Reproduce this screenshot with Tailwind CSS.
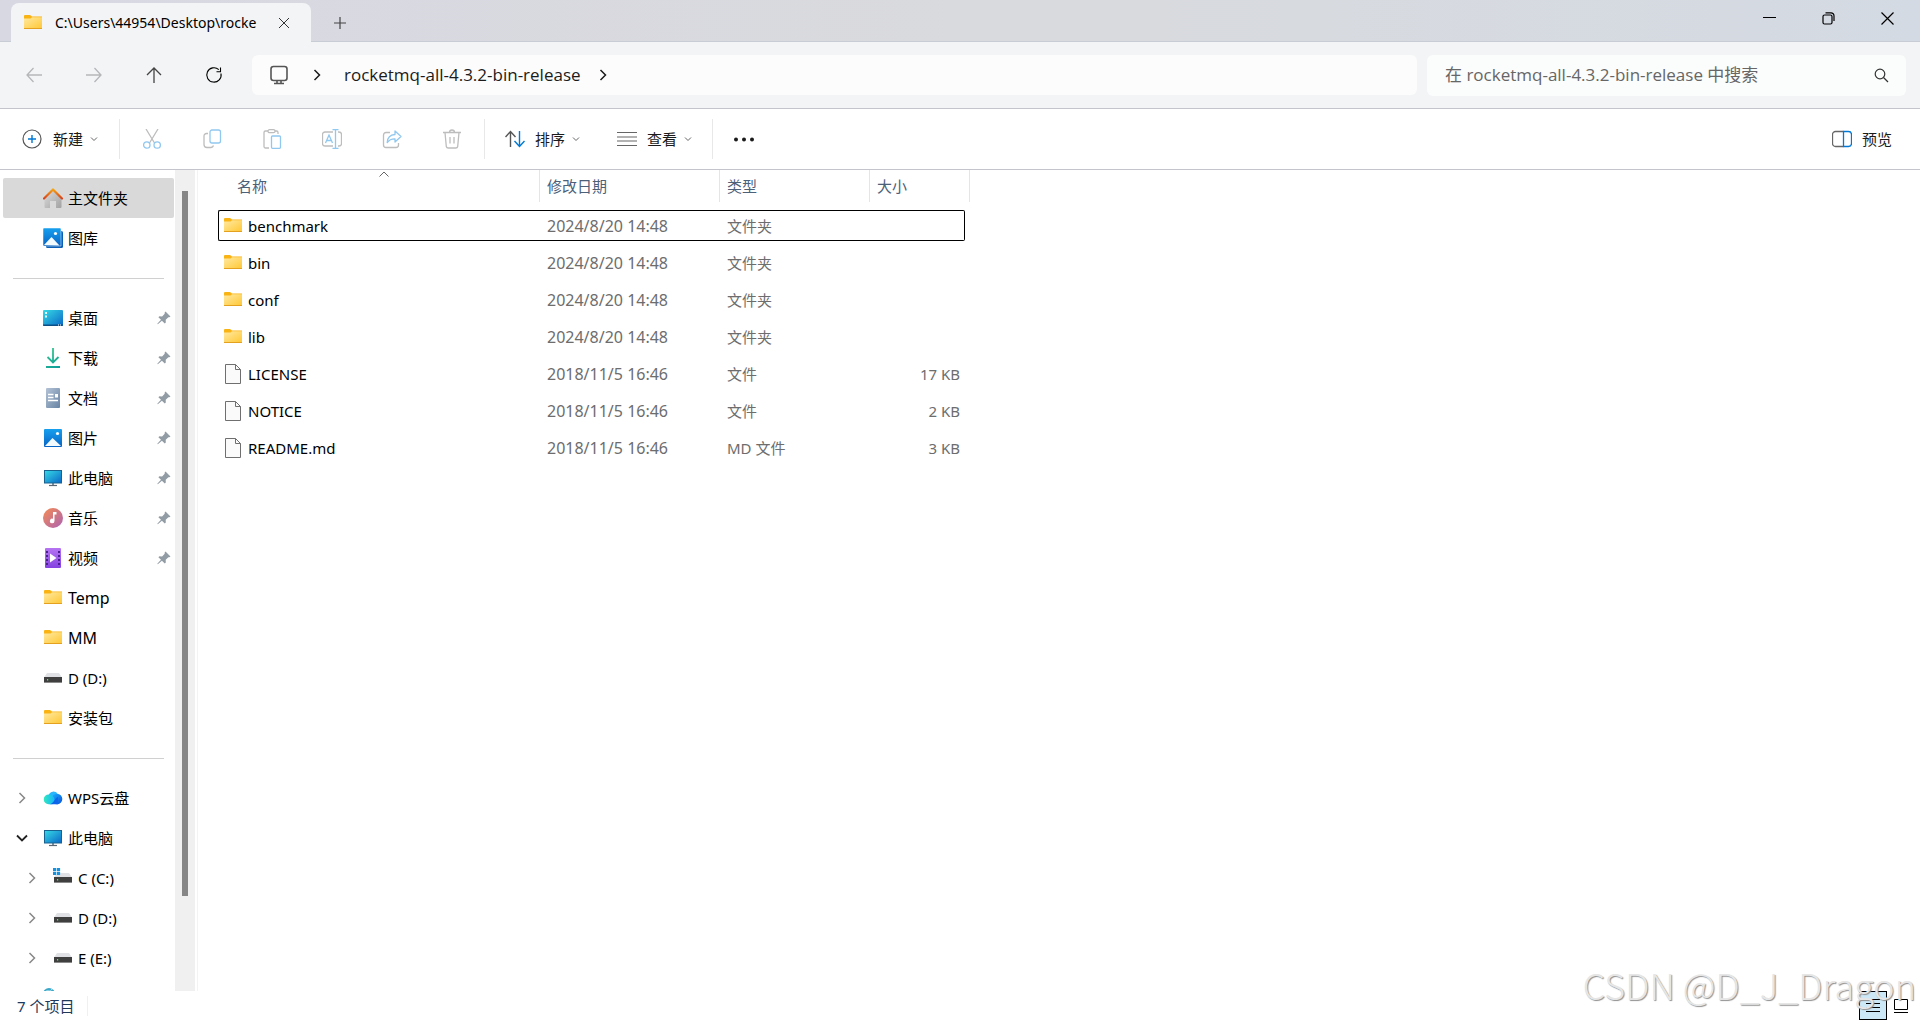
<!DOCTYPE html>
<html lang="zh-CN">
<head>
<meta charset="utf-8">
<meta name="viewport" content="width=device-width, initial-scale=1">
<title>rocketmq-all-4.3.2-bin-release</title>
<script src="https://cdn.jsdelivr.net/npm/@tailwindcss/browser@4"></script>
</head>
<body class="flex h-screen flex-col overflow-hidden bg-white font-['Noto_Sans','Noto_Sans_CJK_SC',sans-serif] text-[15px] leading-5 text-black">

<!-- Shared icon symbols -->
<svg class="absolute size-0" aria-hidden="true">
  <defs>
    <linearGradient id="gFolder" x1="0" y1="0" x2="1" y2="1"><stop offset="0" stop-color="#ffe9a2"/><stop offset="1" stop-color="#ffc937"/></linearGradient>
    <linearGradient id="gBlue" x1="0" y1="0" x2="0" y2="1"><stop offset="0" stop-color="#17a0ee"/><stop offset="1" stop-color="#0863c4"/></linearGradient>
    <linearGradient id="gScreen" x1="0" y1="0" x2="1" y2="1"><stop offset="0" stop-color="#36dbe6"/><stop offset="1" stop-color="#0a67c6"/></linearGradient>
    <linearGradient id="gHome" x1="0" y1="0" x2="1" y2="1"><stop offset="0" stop-color="#dcdcdc"/><stop offset="1" stop-color="#a2a2a2"/></linearGradient>
    <linearGradient id="gRoof" x1="0" y1="0" x2="0" y2="1"><stop offset="0" stop-color="#f6a10f"/><stop offset="1" stop-color="#d6431c"/></linearGradient>
    <linearGradient id="gDown" gradientUnits="userSpaceOnUse" x1="3" y1="0" x2="17" y2="20"><stop offset="0" stop-color="#3ccb8c"/><stop offset="1" stop-color="#0c9c9c"/></linearGradient>
    <linearGradient id="gDoc" x1="0" y1="0" x2="1" y2="1"><stop offset="0" stop-color="#b3c3d6"/><stop offset="1" stop-color="#6783a3"/></linearGradient>
    <linearGradient id="gMusic" x1="0" y1="0" x2="1" y2="1"><stop offset="0" stop-color="#f58b52"/><stop offset="1" stop-color="#ac63b4"/></linearGradient>
    <linearGradient id="gVideo" x1="0" y1="0" x2="0" y2="1"><stop offset="0" stop-color="#b674f2"/><stop offset="1" stop-color="#8443e0"/></linearGradient>
    <linearGradient id="gCloud" x1="0" y1="0" x2="1" y2="0"><stop offset="0" stop-color="#30e8c0"/><stop offset="1" stop-color="#16b4fa"/></linearGradient>
    <linearGradient id="gCloud2" x1="0" y1="0" x2="1" y2="1"><stop offset="0" stop-color="#1aaefc"/><stop offset="1" stop-color="#0b4fdc"/></linearGradient>
  </defs>
  <symbol id="folder" viewBox="0 0 20 20">
    <path d="M1 3a1 1 0 0 1 1-1h5l2 1.600h10V7H1z" fill="#f9b313"/>
    <path d="M1 5.500h6.500L9 4.200h10V15H1z" fill="url(#gFolder)"/>
    <path d="M1 15h18v1H1z" fill="#e3a11f"/>
  </symbol>
  <symbol id="file" viewBox="0 0 20 20">
    <path d="M2.500.5h10l5 5v14h-15z" fill="#fafafa" stroke="#6f6f6f"/>
    <path d="M12.500.5v5h5" fill="none" stroke="#6f6f6f"/>
  </symbol>
  <symbol id="home" viewBox="0 0 20 20">
    <path d="M1.500 9.500 10 2l8.500 7.500V19a1 1 0 0 1-1 1H13v-7H7v7H2.500a1 1 0 0 1-1-1z" fill="url(#gHome)"/>
    <path d="M1 10.500 10 1.500l9 9" fill="none" stroke="url(#gRoof)" stroke-width="2.200" stroke-linecap="round" stroke-linejoin="round"/>
  </symbol>
  <symbol id="gallery" viewBox="0 0 20 20">
    <path d="M5 3h13.500A1.500 1.500 0 0 1 20 4.500v14a1.500 1.500 0 0 1-1.500 1.500h-14A1.500 1.500 0 0 1 3 18.500z" fill="#0a5eb5"/>
    <path d="M1 0h16a1 1 0 0 1 1 1v17H1a1 1 0 0 1-1-1V1a1 1 0 0 1 1-1z" fill="url(#gBlue)" stroke="#fff" stroke-width=".5"/>
    <path d="m1 17 7.500-8 8 8.500z" fill="#f4fbff"/><circle cx="12.500" cy="5.500" r="1.600" fill="#fff"/>
  </symbol>
  <symbol id="desktop" viewBox="0 0 20 20">
    <rect y="2" width="20" height="16" rx="1" fill="url(#gScreen)"/>
    <path d="M0 16.500h20V17a1 1 0 0 1-1 1H1a1 1 0 0 1-1-1z" fill="#0b4f86"/>
    <path d="M2 4h2v2H2zm0 3.500h2v2H2z" fill="#e6ffff"/><path d="M15 17h1m1 0h1" stroke="#fff"/>
  </symbol>
  <symbol id="download" viewBox="0 0 20 20">
    <path d="M10 0v14M4.500 9l5.500 5.500L15.500 9M3 19h14" fill="none" stroke="url(#gDown)" stroke-width="1.800"/>
  </symbol>
  <symbol id="doc" viewBox="0 0 20 20">
    <rect x="3" width="14" height="20" rx="1" fill="url(#gDoc)"/>
    <path d="M5 6.500h5.500M5 9.500h5.500M5 12.500h10" stroke="#fff" stroke-width="1.300"/><path d="M12 6h3v3.500h-3z" fill="#fff"/>
  </symbol>
  <symbol id="picture" viewBox="0 0 20 20">
    <rect x="1" y="1" width="18" height="18" rx="1" fill="url(#gBlue)"/>
    <path d="m2 18 7.500-8 8.500 8z" fill="#f4fbff"/><circle cx="14.500" cy="5.500" r="1.600" fill="#fff"/>
  </symbol>
  <symbol id="pc" viewBox="0 0 20 20">
    <path d="M9 15h2v3H9z" fill="#8396a5"/><path d="M6 17.500h8" stroke="#5b6873" stroke-width="1.200"/>
    <rect x="1.500" y="2.500" width="17" height="12.500" fill="url(#gScreen)" stroke="#18628f"/>
  </symbol>
  <symbol id="music" viewBox="0 0 20 20">
    <circle cx="10" cy="10" r="10" fill="url(#gMusic)"/>
    <path d="M10 4h3.500v2.500H11.500V13a2.300 2.300 0 1 1-1.500-2.200z" fill="#fff"/>
  </symbol>
  <symbol id="video" viewBox="0 0 20 20">
    <rect x="2" width="16" height="20" rx="1" fill="url(#gVideo)"/>
    <path d="M4 3v15M16 3v15" stroke="#4b1f8f" stroke-width="2" stroke-dasharray="2 2"/>
    <path d="m7 5.500 6.500 4.500L7 14.500z" fill="#fff"/>
  </symbol>
  <symbol id="drive" viewBox="0 0 20 20">
    <path d="M4 5h12l3 4.500H1z" fill="#dfe1e4"/>
    <rect x="1" y="9" width="18" height="5.500" fill="#3f3f3f"/><path d="M1 14h18v1H1z" fill="#8a8a8a"/>
    <path d="M4 11h1.200v1.500H4z" fill="#4bea5c"/>
  </symbol>
  <symbol id="cdrive" viewBox="0 0 20 20">
    <use href="#drive"/><path d="M0 0h7v7H0z" fill="#fff"/>
    <path d="M0 0h3.200v3.200H0zM3.900 0h3.200v3.200H3.900zM0 3.900h3.200v3.200H0zM3.900 3.900h3.200v3.200H3.900z" fill="#1593e0"/>
  </symbol>
  <symbol id="cloud" viewBox="0 0 20 20">
    <path d="M5.500 8a5 5 0 0 1 9.500-1.500L17 12H5z" fill="#27b5fb"/>
    <circle cx="14" cy="11" r="5.300" fill="url(#gCloud2)"/>
    <path d="M5.800 6.500c3 0 5.200 2.300 5.700 4.500.4 2.500-1 5.300-3 5.300H5.500a4.900 4.900 0 0 1 .3-9.800z" fill="url(#gCloud)"/>
    <path d="M6 16.300c5 0 5-6 9-7.300v7.300z" fill="#0d63ea"/>
  </symbol>
  <symbol id="net" viewBox="0 0 20 20">
    <circle cx="6" cy="6" r="6" fill="#3aa7c9"/><path d="M2 4c3-3 5 1 7-3" stroke="#b7e6ef" fill="none"/>
  </symbol>
  <symbol id="pin" viewBox="0 0 14 14">
    <path d="M8.500.5 13.500 5.500l-1.200.8-.9-.1-2.700 2.600.1 2.600-1 1L4.900 9.700.8 13.300l-.5-.5 3.700-4L1.400 6.200l1-1 2.700.2 2.600-2.700-.1-1z" fill="#929ca5"/>
  </symbol>
  <symbol id="right" viewBox="0 0 12 12"><path d="m3.500 1 5 5-5 5" fill="none" stroke="currentColor" stroke-width="1.500"/></symbol>
  <symbol id="down" viewBox="0 0 12 12"><path d="m1 3.500 5 5 5-5" fill="none" stroke="currentColor" stroke-width="1.800"/></symbol>
  <symbol id="caret" viewBox="0 0 8 8"><path d="m1 2.500 3 3 3-3" fill="none" stroke="currentColor"/></symbol>
</svg>

<!-- Title bar -->
<header class="flex h-[42px] shrink-0 items-end border-b border-[#c8ccd4] bg-linear-to-r from-[#d8d8e3] via-[#d9dadd] to-[#d4dae3] pl-[11px]">
  <div class="-mb-px flex h-[39px] w-[300px] items-center rounded-t-lg bg-[#f3f4f6] pr-[21px] pl-3">
    <svg class="size-5 shrink-0"><use href="#folder"/></svg>
    <span class="ml-3 w-[204px] overflow-hidden text-sm whitespace-nowrap">C:\Users\44954\Desktop\rocke</span>
    <button aria-label="关闭标签页" class="ml-auto text-[#333]"><svg class="size-3" viewBox="0 0 12 12"><path d="m1 1 10 10M11 1 1 11" stroke="currentColor"/></svg></button>
  </div>
  <button aria-label="新建标签页" class="mb-3 ml-[23px] text-[#444]"><svg class="size-3" viewBox="0 0 12 12"><path d="M6 0v12M0 6h12" stroke="currentColor" stroke-width="1.200"/></svg></button>
  <div class="mr-[26px] ml-auto flex gap-[46px] self-start pt-3 text-black">
    <button aria-label="最小化"><svg class="size-[13px]" viewBox="0 0 13 13"><path d="M0 5.500h13" stroke="currentColor"/></svg></button>
    <button aria-label="还原"><svg class="size-[13px]" viewBox="0 0 13 13"><rect x="1" y="3" width="9" height="9" rx="1.500" fill="none" stroke="currentColor" stroke-width="1.200"/><path d="M3.500.8H9A3 3 0 0 1 12 4v5" fill="none" stroke="currentColor" stroke-width="1.200"/></svg></button>
    <button aria-label="关闭"><svg class="size-[13px]" viewBox="0 0 13 13"><path d="m.5.5 12 12m0-12-12 12" stroke="currentColor" stroke-width="1.200"/></svg></button>
  </div>
</header>

<!-- Address row -->
<nav aria-label="导航" class="flex h-[67px] shrink-0 items-center border-b border-[#c4c5cc] bg-[#f3f4f6] pr-[14px] pl-[25px]">
  <div class="flex w-[227px] shrink-0 gap-[42px] text-[#444]">
    <button aria-label="后退" class="text-[#b5b6b9]"><svg class="size-[18px]" viewBox="0 0 18 18"><path d="M17 9H2m6.500-7L2 9l6.500 7" fill="none" stroke="currentColor" stroke-width="1.300"/></svg></button>
    <button aria-label="前进" class="text-[#b5b6b9]"><svg class="size-[18px]" viewBox="0 0 18 18"><path d="M1 9h15M9.500 2 16 9l-6.500 7" fill="none" stroke="currentColor" stroke-width="1.300"/></svg></button>
    <button aria-label="向上"><svg class="size-[18px]" viewBox="0 0 18 18"><path d="M9 17V2M2 9l7-7 7 7" fill="none" stroke="currentColor" stroke-width="1.300"/></svg></button>
    <button aria-label="刷新" class="text-black"><svg class="size-[18px]" viewBox="0 0 18 18"><path d="M16 7.500A7.200 7.200 0 1 1 13.800 3.600M11.500 5.800h4V1.500" fill="none" stroke="currentColor" stroke-width="1.100"/></svg></button>
  </div>
  <div class="flex h-10 min-w-0 flex-1 items-center rounded-md bg-[#fcfcfc] pl-[17px] text-[17px] text-[#1b1b1b]">
    <svg class="size-5" viewBox="0 0 20 20" fill="none" stroke="#555" stroke-width="1.600"><rect x="2" y="1.500" width="16" height="14" rx="2.500"/><path d="M8 15.500V18m4-2.500V18M5 18.500h10"/></svg>
    <svg class="ml-[22px] size-3"><use href="#right"/></svg>
    <a href="#" class="mr-4 ml-[21px] font-['Open_Sans'] whitespace-nowrap">rocketmq-all-4.3.2-bin-release</a>
    <svg class="size-3"><use href="#right"/></svg>
  </div>
  <form role="search" class="ml-[10px] flex h-[41px] w-[479px] shrink-0 items-center rounded-md bg-[#fbfcfc] pr-[17px] pl-[18px]">
    <input type="text" aria-label="搜索" placeholder="在 rocketmq-all-4.3.2-bin-release 中搜索" class="min-w-0 flex-1 bg-transparent font-['Open_Sans','Noto_Sans_CJK_SC',sans-serif] text-[17px] text-[#333] outline-none placeholder:text-[#666]">
    <button type="button" aria-label="搜索"><svg class="size-[15px]" viewBox="0 0 15 15" fill="none" stroke="#333" stroke-width="1.200"><circle cx="6" cy="6" r="4.800"/><path d="m9.500 9.500 4.500 4.500"/></svg></button>
  </form>
</nav>

<!-- Command bar -->
<div role="toolbar" aria-label="命令" class="flex h-[61px] shrink-0 items-center border-b border-[#c4c5cc] pr-7 pl-[22px] text-[#1b1b1b]">
  <button class="flex w-[97px] items-center">
    <svg class="mr-[11px] size-5" viewBox="0 0 20 20" fill="none"><circle cx="10" cy="10" r="9" stroke="#555" stroke-width="1.200"/><path d="M10 6v8m-4-4h8" stroke="#0078d4" stroke-width="1.400"/></svg>
    新建
    <svg class="ml-[7px] size-2 text-[#666]"><use href="#caret"/></svg>
  </button>
  <div class="flex h-10 items-center gap-10 border-x border-[#e8e8e8] px-[22px]">
    <button disabled aria-label="剪切"><svg class="size-5" viewBox="0 0 20 20" fill="none" stroke-width="1.300"><path d="M4 0l8.500 14M16 0 7.500 14" stroke="#bdbdbd"/><circle cx="4.800" cy="16" r="3.200" stroke="#90c8f0"/><circle cx="15.200" cy="16" r="3.200" stroke="#90c8f0"/></svg></button>
    <button disabled aria-label="复制"><svg class="size-5" viewBox="0 0 20 20" fill="none" stroke-width="1.300"><path d="M6 4.500H4.500A2.500 2.500 0 0 0 2 7v8.500A3 3 0 0 0 5 18.500h4a3 3 0 0 0 2.500-2" stroke="#bdbdbd"/><rect x="8" y="1" width="10.500" height="13" rx="2" stroke="#90c8f0"/></svg></button>
    <button disabled aria-label="粘贴"><svg class="size-5" viewBox="0 0 20 20" fill="none" stroke-width="1.300"><path d="M7 19H3.500A1.500 1.500 0 0 1 2 17.500v-14A1.500 1.500 0 0 1 3.500 2H6m7 0h1.500A1.500 1.500 0 0 1 16 3.500V5" stroke="#bdbdbd"/><rect x="6" y=".7" width="7" height="3" rx="1.500" stroke="#bdbdbd"/><rect x="9.500" y="7" width="9" height="12.300" rx="1" stroke="#90c8f0"/></svg></button>
    <button disabled aria-label="重命名"><svg class="size-5" viewBox="0 0 20 20" fill="none" stroke-width="1.300"><path d="M11 3H3a2.500 2.500 0 0 0-2.500 2.500v9A2.500 2.500 0 0 0 3 17h8m5-14h1a2.500 2.500 0 0 1 2.500 2.500v9A2.500 2.500 0 0 1 17 17h-1" stroke="#bdbdbd"/><path d="M3.500 14 7 6l3.500 8M4.700 11.500h4.600M13.500.7v18.600M10.500.7h6m-6 18.600h6" stroke="#90c8f0"/></svg></button>
    <button disabled aria-label="共享"><svg class="size-5" viewBox="0 0 20 20" fill="none" stroke-width="1.300"><path d="M8 3.500H4A2.500 2.500 0 0 0 1.500 6v10A2.500 2.500 0 0 0 4 18.500h10a2.500 2.500 0 0 0 2.500-2.500v-2" stroke="#bdbdbd"/><path d="M13 2v3.500c-5 .3-7.500 3.500-7.800 8 2-2.700 4.300-3.800 7.800-3.700V13l6-5.500z" stroke="#90c8f0" stroke-linejoin="round"/></svg></button>
    <button disabled aria-label="删除"><svg class="size-5" viewBox="0 0 20 20" fill="none" stroke="#bdbdbd" stroke-width="1.300"><path d="M1 3.500h18M7.500 3.500a2.500 2.500 0 0 1 5 0M3 3.500l1.300 14A2 2 0 0 0 6.300 19h7.400a2 2 0 0 0 2-1.500L17 3.500M8 8v6.500M12 8v6.500"/></svg></button>
  </div>
  <div class="flex h-10 items-center gap-[37px] border-r border-[#e8e8e8] px-5">
    <button class="flex items-center">
      <svg class="mr-[10px] size-5" viewBox="0 0 20 20" fill="none" stroke-width="1.400"><path d="M5.500 18V3M.5 8l5-5.500 5 5.500" stroke="#555"/><path d="M14.500 2v15M9.500 12l5 5.500 5-5.500" stroke="#0078d4"/></svg>
      排序
      <svg class="ml-[7px] size-2 text-[#666]"><use href="#caret"/></svg>
    </button>
    <button class="flex items-center">
      <svg class="mr-[10px] size-5" viewBox="0 0 20 20" stroke="#666" stroke-width="1.200"><path d="M0 3.500h20M0 8h20M0 12h20M0 16.500h20"/></svg>
      查看
      <svg class="ml-[7px] size-2 text-[#666]"><use href="#caret"/></svg>
    </button>
  </div>
  <button aria-label="更多" class="ml-5"><svg class="h-5 w-[22px]" viewBox="0 0 22 20"><g fill="#1b1b1b"><circle cx="3" cy="10.500" r="2"/><circle cx="11" cy="10.500" r="2"/><circle cx="19" cy="10.500" r="2"/></g></svg></button>
  <button class="ml-auto flex items-center">
    <svg class="mr-[10px] size-5" viewBox="0 0 20 20" fill="none" stroke-width="1.300"><path d="M11.500 2.500h-8a3 3 0 0 0-3 3v9a3 3 0 0 0 3 3h8" stroke="#666"/><path d="M11.500 2.500h5a3 3 0 0 1 3 3v9a3 3 0 0 1-3 3h-5z" stroke="#0078d4"/></svg>
    预览
  </button>
</div>

<main class="flex min-h-0 flex-1">
  <!-- Navigation pane -->
  <aside class="flex w-[198px] shrink-0 border-r border-[#f3f3f3]">
    <div class="min-w-0 flex-1 overflow-hidden pt-2">
      <a href="#" class="mr-px ml-[3px] flex h-10 items-center gap-[5px] rounded-xs bg-[#d9d9d9] pl-10"><svg class="size-5"><use href="#home"/></svg>主文件夹</a>
      <a href="#" class="flex h-10 items-center gap-[5px] pl-[43px]"><svg class="size-5"><use href="#gallery"/></svg>图库</a>
      <div class="flex h-10 items-center pr-[11px] pl-[13px]"><hr class="flex-1 border-[#d0d0d0]"></div>
      <a href="#" class="flex h-10 items-center gap-[5px] pr-1 pl-[43px]"><svg class="size-5"><use href="#desktop"/></svg>桌面<svg class="ml-auto size-[14px]"><use href="#pin"/></svg></a>
      <a href="#" class="flex h-10 items-center gap-[5px] pr-1 pl-[43px]"><svg class="size-5"><use href="#download"/></svg>下载<svg class="ml-auto size-[14px]"><use href="#pin"/></svg></a>
      <a href="#" class="flex h-10 items-center gap-[5px] pr-1 pl-[43px]"><svg class="size-5"><use href="#doc"/></svg>文档<svg class="ml-auto size-[14px]"><use href="#pin"/></svg></a>
      <a href="#" class="flex h-10 items-center gap-[5px] pr-1 pl-[43px]"><svg class="size-5"><use href="#picture"/></svg>图片<svg class="ml-auto size-[14px]"><use href="#pin"/></svg></a>
      <a href="#" class="flex h-10 items-center gap-[5px] pr-1 pl-[43px]"><svg class="size-5"><use href="#pc"/></svg>此电脑<svg class="ml-auto size-[14px]"><use href="#pin"/></svg></a>
      <a href="#" class="flex h-10 items-center gap-[5px] pr-1 pl-[43px]"><svg class="size-5"><use href="#music"/></svg>音乐<svg class="ml-auto size-[14px]"><use href="#pin"/></svg></a>
      <a href="#" class="flex h-10 items-center gap-[5px] pr-1 pl-[43px]"><svg class="size-5"><use href="#video"/></svg>视频<svg class="ml-auto size-[14px]"><use href="#pin"/></svg></a>
      <a href="#" class="flex h-10 items-center gap-[5px] pl-[43px] text-base"><svg class="size-5"><use href="#folder"/></svg>Temp</a>
      <a href="#" class="flex h-10 items-center gap-[5px] pl-[43px] text-base"><svg class="size-5"><use href="#folder"/></svg>MM</a>
      <a href="#" class="flex h-10 items-center gap-[5px] pl-[43px]"><svg class="size-5"><use href="#drive"/></svg>D (D:)</a>
      <a href="#" class="flex h-10 items-center gap-[5px] pl-[43px]"><svg class="size-5"><use href="#folder"/></svg>安装包</a>
      <div class="flex h-10 items-center pr-[11px] pl-[13px]"><hr class="flex-1 border-[#d0d0d0]"></div>
      <a href="#" class="flex h-10 items-center gap-[5px] pl-4"><svg class="mr-[10px] size-3 text-[#888]"><use href="#right"/></svg><svg class="size-5"><use href="#cloud"/></svg>WPS云盘</a>
      <a href="#" class="flex h-10 items-center gap-[5px] pl-4"><svg class="mr-[10px] size-3 text-[#222]"><use href="#down"/></svg><svg class="size-5"><use href="#pc"/></svg>此电脑</a>
      <a href="#" class="flex h-10 items-center gap-[5px] pl-[26px]"><svg class="mr-[10px] size-3 text-[#888]"><use href="#right"/></svg><svg class="size-5"><use href="#cdrive"/></svg>C (C:)</a>
      <a href="#" class="flex h-10 items-center gap-[5px] pl-[26px]"><svg class="mr-[10px] size-3 text-[#888]"><use href="#right"/></svg><svg class="size-5"><use href="#drive"/></svg>D (D:)</a>
      <a href="#" class="flex h-10 items-center gap-[5px] pl-[26px]"><svg class="mr-[10px] size-3 text-[#888]"><use href="#right"/></svg><svg class="size-5"><use href="#drive"/></svg>E (E:)</a>
      <a href="#" aria-label="网络" class="flex h-10 items-center pl-[43px]"><svg class="size-5"><use href="#net"/></svg></a>
    </div>
    <div class="flex w-5 shrink-0 flex-col items-center bg-[#f0f0f0] pt-[21px] pb-[95px]"><div class="w-[6px] flex-1 bg-[#868686]"></div></div>
    <div class="w-[2px]"></div>
  </aside>

  <!-- File list -->
  <section class="min-w-0 flex-1 pl-5">
    <table class="w-[752px] table-fixed border-collapse text-left text-[#6d6d6d]">
      <colgroup><col class="w-[322px]"><col class="w-[180px]"><col class="w-[150px]"><col class="w-[100px]"></colgroup>
      <thead class="text-[#4c607a]">
        <tr class="h-[37px] align-top">
          <th scope="col" class="p-0 font-normal"><div class="relative flex h-8 items-center border-r border-[#e5e5e5] pl-[19px]">名称<svg class="absolute top-px left-[161px] h-[6px] w-[10px]" viewBox="0 0 10 6"><path d="m.5 5.500 4.500-4.500 4.500 4.500" fill="none" stroke="#666"/></svg></div></th>
          <th scope="col" class="p-0 font-normal"><div class="flex h-8 items-center border-r border-[#e5e5e5] pl-[7px]">修改日期</div></th>
          <th scope="col" class="p-0 font-normal"><div class="flex h-8 items-center border-r border-[#e5e5e5] pl-[7px]">类型</div></th>
          <th scope="col" class="p-0 font-normal"><div class="flex h-8 items-center border-r border-[#e5e5e5] pl-[7px]">大小</div></th>
        </tr>
      </thead>
      <tbody>
        <tr class="h-[37px]">
          <td class="p-0"><div class="flex h-[31px] items-center gap-[5px] rounded-l-xs border-y border-l border-black pl-1 text-black"><svg class="size-5"><use href="#folder"/></svg>benchmark</div></td>
          <td class="p-0"><div class="flex h-[31px] items-center border-y border-black pl-[7px] text-base">2024/8/20 14:48</div></td>
          <td class="p-0"><div class="flex h-[31px] items-center border-y border-black pl-[7px]">文件夹</div></td>
          <td class="p-0"><div class="mr-[5px] h-[31px] rounded-r-xs border-y border-r border-black"></div></td>
        </tr>
        <tr class="h-[37px]">
          <td class="p-0"><div class="flex items-center gap-[5px] pl-[5px] text-black"><svg class="size-5"><use href="#folder"/></svg>bin</div></td>
          <td class="p-0 pl-[7px] text-base">2024/8/20 14:48</td><td class="p-0 pl-[7px]">文件夹</td><td class="p-0"></td>
        </tr>
        <tr class="h-[37px]">
          <td class="p-0"><div class="flex items-center gap-[5px] pl-[5px] text-black"><svg class="size-5"><use href="#folder"/></svg>conf</div></td>
          <td class="p-0 pl-[7px] text-base">2024/8/20 14:48</td><td class="p-0 pl-[7px]">文件夹</td><td class="p-0"></td>
        </tr>
        <tr class="h-[37px]">
          <td class="p-0"><div class="flex items-center gap-[5px] pl-[5px] text-black"><svg class="size-5"><use href="#folder"/></svg>lib</div></td>
          <td class="p-0 pl-[7px] text-base">2024/8/20 14:48</td><td class="p-0 pl-[7px]">文件夹</td><td class="p-0"></td>
        </tr>
        <tr class="h-[37px]">
          <td class="p-0"><div class="flex items-center gap-[5px] pl-[5px] text-black"><svg class="size-5"><use href="#file"/></svg>LICENSE</div></td>
          <td class="p-0 pl-[7px] text-base">2018/11/5 16:46</td><td class="p-0 pl-[7px]">文件</td><td class="p-0 pr-[10px] text-right">17 KB</td>
        </tr>
        <tr class="h-[37px]">
          <td class="p-0"><div class="flex items-center gap-[5px] pl-[5px] text-black"><svg class="size-5"><use href="#file"/></svg>NOTICE</div></td>
          <td class="p-0 pl-[7px] text-base">2018/11/5 16:46</td><td class="p-0 pl-[7px]">文件</td><td class="p-0 pr-[10px] text-right">2 KB</td>
        </tr>
        <tr class="h-[37px]">
          <td class="p-0"><div class="flex items-center gap-[5px] pl-[5px] text-black"><svg class="size-5"><use href="#file"/></svg>README.md</div></td>
          <td class="p-0 pl-[7px] text-base">2018/11/5 16:46</td><td class="p-0 pl-[7px]">MD 文件</td><td class="p-0 pr-[10px] text-right">3 KB</td>
        </tr>
      </tbody>
    </table>
  </section>
</main>

<!-- Status bar -->
<footer class="relative flex h-[29px] shrink-0 items-center pr-3 pl-[17px] text-[#1e395b]">
  <span class="border-r border-[#f0f0f0] pr-[13px]">7 个项目</span>
  <button aria-label="详细信息视图" class="ml-auto flex h-[29px] w-7 items-center justify-center border border-black bg-[#cce8f6]"><svg class="size-[14px]" viewBox="0 0 14 14"><path d="M0 .5h14M0 4.500h14M0 8.500h14M0 12.500h14" stroke="#000"/></svg></button>
  <button aria-label="大图标视图" class="ml-[7px]"><svg class="size-[14px]" viewBox="0 0 14 14" fill="none" stroke="#000"><path d="M.5.5h13v10H.5zM0 13.500h14"/></svg></button>
  <p class="pointer-events-none absolute right-1 bottom-3 font-['Noto_Sans_CJK_SC',sans-serif] text-4xl leading-12 font-light whitespace-nowrap text-[#e6e6e6] [text-shadow:1px_1px_1px_#909090]">CSDN @D_J_Dragon</p>
</footer>
</body>
</html>
